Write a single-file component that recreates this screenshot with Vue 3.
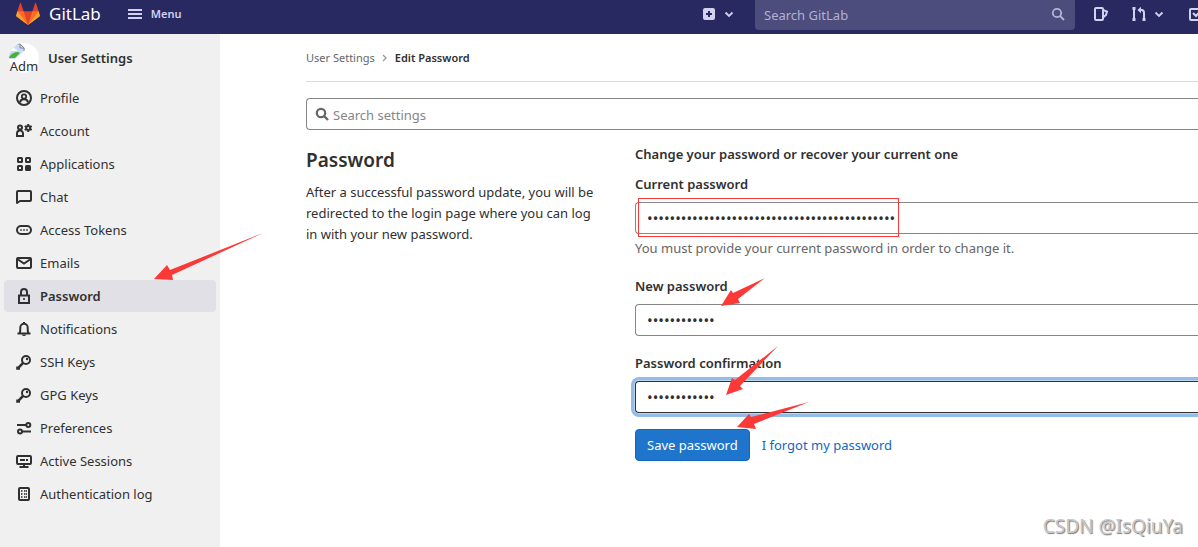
<script setup>
import { ref } from 'vue'

const currentPassword = ref('x'.repeat(44))
const newPassword = ref('x'.repeat(12))
const confirmation = ref('x'.repeat(12))

const items = [
  { label: 'Profile', icon: 'profile' },
  { label: 'Account', icon: 'account' },
  { label: 'Applications', icon: 'applications' },
  { label: 'Chat', icon: 'chat' },
  { label: 'Access Tokens', icon: 'token' },
  { label: 'Emails', icon: 'mail' },
  { label: 'Password', icon: 'lock', active: true },
  { label: 'Notifications', icon: 'bell' },
  { label: 'SSH Keys', icon: 'key' },
  { label: 'GPG Keys', icon: 'key' },
  { label: 'Preferences', icon: 'sliders' },
  { label: 'Active Sessions', icon: 'monitor' },
  { label: 'Authentication log', icon: 'log' },
]

const shape = 'fill="none" stroke="currentColor"'
const line = `${shape} stroke-width="2"`
const icons = {
  profile: `<circle cx="8" cy="8" r="7" ${line}/><circle cx="8" cy="6.5" r="2.2" ${shape} stroke-width="1.800"/><path d="M4 12.500c.3-2.300 1.600-3.300 4-3.300s3.700 1 4 3.300" ${line}/>`,
  account: `<circle cx="4" cy="4.500" r="2" ${line}/><path d="M1 13V10.500a3 3 0 0 1 6 0V13z" ${line}/><circle cx="12.200" cy="5" r="2" ${line}/><path d="M12.200 1v1.500M12.200 7.500V9M8.700 3l1.400.8M14.300 6.200l1.400.8M8.700 7l1.400-.8M14.300 3.800l1.400-.8" ${line}/>`,
  applications: `<rect x="2" y="2" width="4" height="4" rx=".5" ${line}/><rect x="10" y="2" width="4" height="4" rx=".5" ${line}/><rect x="2" y="10" width="4" height="4" rx=".5" ${line}/><rect x="9" y="9" width="6" height="6" rx="1.500" fill="currentColor"/>`,
  chat: `<path d="M1 14V3a1 1 0 0 1 1-1h12a1 1 0 0 1 1 1v8a1 1 0 0 1-1 1H4z" ${line} stroke-linejoin="round"/>`,
  token: `<rect x="1" y="4" width="14" height="8" rx="4" ${line}/><path d="M4 7h2v2H4zM7 7h2v2H7zM10 7h2v2h-2z" fill="currentColor" opacity=".6"/>`,
  mail: `<rect x="1" y="3" width="14" height="10" rx="1" ${line}/><path d="M2 4.500l6 4 6-4" ${line}/>`,
  lock: `<path d="M3 7.500h10V15H3z" ${line}/><path d="M5 7V4a3 3 0 0 1 6 0v3" ${line}/><circle cx="8" cy="11" r="1.100" fill="currentColor"/>`,
  bell: `<path d="M1.500 12.500h13M3.500 12.500c1-1.500.8-3.500.8-6a3.700 3.700 0 0 1 7.400 0c0 2.500-.2 4.500.8 6M8 1v2" ${line}/><path d="M6 13.500h4a2 1.500 0 0 1-4 0z" fill="currentColor"/>`,
  key: `<circle cx="10" cy="6" r="4" ${line}/><circle cx="11" cy="5" r="1.200" fill="currentColor"/><path d="M7.400 8.600L2.300 13.800M1.500 12.500v2h2.500" ${shape} stroke-width="2.600"/>`,
  sliders: `<path d="M1 5h9M6 11.500h9" ${line}/><circle cx="12.300" cy="5" r="2" ${line}/><circle cx="4" cy="11.500" r="2" ${line}/>`,
  monitor: `<rect x="1" y="3" width="14" height="8" rx="1" ${line}/><path d="M8 11v3M3.500 14h9" ${line}/><path d="M4 7h5M10 7h2" ${line}/>`,
  log: `<rect x="3" y="2" width="10" height="12" rx="1" ${line}/><path d="M5 5h2M8 5h3M5 8h2M8 8h3M5 11h2M8 11h3" ${line} stroke-dasharray="1.500 .5" opacity=".8"/>`,
}
</script>

<template>
  <div class="page">
    <header class="navbar">
      <a class="brand" href="#">
        <svg class="logo" viewBox="0 0 36 36" aria-hidden="true">
          <path fill="#e24329" d="M2 14l9.380 9v-9l-4-12.280c-.205-.632-1.176-.632-1.380 0z" />
          <path fill="#e24329" d="M34 14l-9.380 9v-9l4-12.280c.205-.632 1.176-.632 1.380 0z" />
          <path fill="#e24329" d="M18 34.380L3 14h30z" />
          <path fill="#fc6d26" d="M18 34.380L11.380 14H2l4 11zM18 34.380L24.620 14H34l-4 11z" />
          <path fill="#fca326" d="M2 14L.1 20.160c-.18.565 0 1.200.5 1.560l17.420 12.660zM34 14l1.900 6.160c.18.565 0 1.200-.5 1.560L18 34.380z" />
        </svg>
        <span>GitLab</span>
      </a>
      <button class="menu" type="button">
        <svg class="icon" viewBox="0 0 14 14"><path d="M0 3h14M0 7h14M0 11h14" fill="none" stroke="currentColor" stroke-width="2" /></svg>
        <span>Menu</span>
      </button>
      <div class="nav-right">
        <button class="nav-button new" type="button" aria-label="Create new">
          <svg class="icon" viewBox="0 0 16 16"><path fill="currentColor" fill-rule="evenodd" d="M4 2h8a2 2 0 0 1 2 2v8a2 2 0 0 1-2 2H4a2 2 0 0 1-2-2V4a2 2 0 0 1 2-2zm3 3v2H5v2h2v2h2V9h2V7H9V5z" /></svg>
          <svg class="chevron" viewBox="0 0 12 12"><path d="M2.500 4.500L6 8l3.500-3.500" fill="none" stroke="currentColor" stroke-width="1.800" /></svg>
        </button>
        <div class="nav-search">
          <input type="text" placeholder="Search GitLab" aria-label="Search GitLab" />
          <svg class="icon-small" viewBox="0 0 14 14"><circle cx="6" cy="6" r="4.200" fill="none" stroke="currentColor" stroke-width="1.800" /><path d="M9 9l4 4" stroke="currentColor" stroke-width="1.800" /></svg>
        </div>
        <button class="nav-button issues" type="button" aria-label="Issues">
          <svg class="icon" viewBox="0 0 16 16" fill="none" stroke="currentColor" stroke-width="2"><rect x="2" y="2" width="8" height="12" rx="1" /><path d="M10 4l4 1.500-1 3.500-3 2.500" /></svg>
        </button>
        <button class="nav-button merges" type="button" aria-label="Merge requests">
          <svg class="icon" viewBox="0 0 16 16" fill="none" stroke="currentColor" stroke-width="2"><path d="M3 3v10M8 4h2.500c2 0 2.500 1.500 2.500 3v6" /><path d="M1.500 2.500h3M1.500 13.500h3M11.500 13.500h3" stroke-width="3" /><path d="M6.500 4L10 .8v6.400z" fill="currentColor" stroke="none" /></svg>
          <svg class="chevron" viewBox="0 0 12 12"><path d="M2.500 4.500L6 8l3.500-3.500" fill="none" stroke="currentColor" stroke-width="1.800" /></svg>
        </button>
        <button class="nav-button todos" type="button" aria-label="To-do list">
          <svg class="icon" viewBox="0 0 16 16" fill="none" stroke="currentColor" stroke-width="2"><path d="M13 9v4a1 1 0 0 1-1 1H3a1 1 0 0 1-1-1V4a1 1 0 0 1 1-1h7M5 7l3 3 6-7" /></svg>
        </button>
      </div>
    </header>

    <div class="body">
      <aside class="sidebar">
        <a class="context" href="#">
          <span class="avatar">
            <svg viewBox="0 0 16 16" aria-hidden="true">
              <path fill="#c6dcfb" d="M0 0h11l5 5v11H0z" />
              <path fill="#fff" d="M2 7a2 2 0 0 1 4-1 2 2 0 0 1 2 2H2z" />
              <path fill="#4caf37" d="M0 14c2-3 5-5 9-5l2 1-5 5H0z" />
              <path fill="#fff" d="M6 16L16 7v9z" />
              <path fill="none" stroke="#888" d="M1 1h10v4h4v3M11 1l4 4" />
            </svg>
            <span>Adm</span>
          </span>
          <span>User Settings</span>
        </a>
        <nav>
          <ul>
            <li v-for="item in items" :key="item.label">
              <a href="#" :class="{ active: item.active }">
                <svg class="icon" viewBox="0 0 16 16" v-html="icons[item.icon]"></svg>
                <span>{{ item.label }}</span>
              </a>
            </li>
          </ul>
        </nav>
      </aside>

      <main>
        <nav class="breadcrumbs" aria-label="Breadcrumbs">
          <a href="#">User Settings</a>
          <svg viewBox="0 0 8 8"><path d="M2 1l3 3-3 3" fill="none" stroke="#999" stroke-width="1.300" /></svg>
          <a class="here" href="#">Edit Password</a>
        </nav>
        <div class="settings-search">
          <svg class="icon-small" viewBox="0 0 14 14"><circle cx="6" cy="6" r="4.200" fill="none" stroke="currentColor" stroke-width="2.200" /><path d="M9 9l4 4" stroke="currentColor" stroke-width="2.400" /></svg>
          <input type="text" placeholder="Search settings" aria-label="Search settings" />
        </div>
        <div class="columns">
          <section>
            <h1>Password</h1>
            <p>After a successful password update, you will be redirected to the login page where you can log in with your new password.</p>
          </section>
          <form @submit.prevent>
            <h2>Change your password or recover your current one</h2>
            <div class="field">
              <label for="current">Current password</label>
              <div class="control">
                <input id="current" v-model="currentPassword" type="password" />
                <span class="highlight"></span>
              </div>
              <p class="hint">You must provide your current password in order to change it.</p>
            </div>
            <div class="field">
              <label for="new">New password</label>
              <input id="new" v-model="newPassword" type="password" />
            </div>
            <div class="field">
              <label for="confirm">Password confirmation</label>
              <input id="confirm" v-model="confirmation" class="focused" type="password" />
            </div>
            <div class="actions">
              <button type="submit">Save password</button>
              <a href="#">I forgot my password</a>
            </div>
          </form>
        </div>
      </main>
    </div>

    <svg class="arrows" width="820" height="440" viewBox="0 0 820 440" aria-hidden="true">
      <path d="M154 279L167 265L170 270L263 233L172 275L173 280z" />
      <path d="M721 306L731 290L733 293L765 278L738 299L740 303z" />
      <path d="M726 395L732 378L735 380L778 346L740 386L743 389z" />
      <path d="M737 427L749 414L751 417L809 402L754 424L756 429z" />
    </svg>
    <span class="watermark">CSDN @IsQiuYa</span>
  </div>
</template>

<style>
body {
  margin: 0;
}
</style>

<style scoped>
* {
  box-sizing: border-box;
}
.page {
  position: relative;
  display: flex;
  flex-direction: column;
  min-height: 100vh;
  overflow: hidden;
  background: #fff;
  color: #303030;
  font: 13px/20px "Noto Sans", "Open Sans", sans-serif;
}
a {
  color: inherit;
  text-decoration: none;
}
button,
input {
  font: inherit;
}
.icon {
  flex: none;
  width: 16px;
  height: 16px;
}
.icon-small {
  flex: none;
  width: 14px;
  height: 14px;
}
.chevron {
  width: 12px;
  height: 12px;
}
.navbar {
  display: flex;
  align-items: center;
  height: 34px;
  padding: 0 0 6px 16px;
  background: #292961;
  color: #d1d1f0;
}
.brand {
  display: flex;
  align-items: center;
  gap: 9px;
  color: #fff;
  font-size: 17px;
}
.logo {
  width: 24px;
  height: 24px;
}
.menu,
.nav-button {
  display: flex;
  align-items: center;
  padding: 0;
  border: 0;
  background: none;
  color: inherit;
}
.menu {
  gap: 9px;
  margin-left: 27px;
  font-size: 11px;
  font-weight: 600;
}
.menu .icon {
  width: 14px;
  height: 14px;
}
.nav-right {
  display: flex;
  align-items: center;
  margin: 0 -6px 0 auto;
}
.new {
  gap: 6px;
  margin-right: 20px;
}
.nav-search {
  display: flex;
  align-items: center;
  width: 320px;
  height: 32px;
  margin-right: 18px;
  padding: 0 10px 0 9px;
  border-radius: 4px;
  background: #4c4c7d;
  color: #b5b5d8;
}
.nav-search input {
  flex: 1;
  min-width: 0;
  padding: 2px 0 0;
  border: 0;
  outline: 0;
  background: none;
  color: inherit;
}
.nav-search input::placeholder {
  color: #b1b1d2;
}
.issues {
  margin-right: 22px;
}
.merges {
  gap: 6px;
  margin-right: 23px;
}
.body {
  display: flex;
  flex: 1;
}
.sidebar {
  flex: none;
  width: 220px;
  padding: 8px 4px;
  background: #f0f0f0;
}
.context {
  display: flex;
  align-items: center;
  gap: 9px;
  height: 32px;
  margin-bottom: 8px;
  padding-left: 5px;
  font-weight: 600;
}
.avatar {
  width: 30px;
  height: 30px;
  border-radius: 50%;
  background: #fff;
  font-weight: 400;
  line-height: 14px;
  text-align: center;
}
.avatar svg {
  display: block;
  width: 16px;
  height: 16px;
  border-top-left-radius: 15px;
}
.avatar span {
  display: block;
}
ul {
  display: grid;
  gap: 1px;
  margin: 0;
  padding: 0;
  list-style: none;
}
li a {
  display: flex;
  align-items: center;
  gap: 8px;
  height: 32px;
  padding: 0 12px;
  border-radius: 4px;
}
li .active {
  background: #e1e0e6;
  font-weight: 600;
}
main {
  flex: 1;
  min-width: 0;
  padding-left: 86px;
}
.breadcrumbs {
  display: flex;
  align-items: center;
  gap: 6px;
  height: 48px;
  margin-bottom: 16px;
  border-bottom: 1px solid #dbdbdb;
  color: #666;
  font-size: 11px;
}
.breadcrumbs svg {
  width: 8px;
  height: 8px;
}
.here {
  color: #303030;
  font-weight: 600;
}
.settings-search,
form input {
  border: 1px solid #868686;
  border-right: 0;
  border-radius: 4px 0 0 4px;
  background: #fff;
}
.settings-search {
  display: flex;
  align-items: center;
  gap: 4px;
  height: 32px;
  padding-left: 8px;
  color: #666;
}
.settings-search input {
  flex: 1;
  padding: 2px 0 0;
  border: 0;
  outline: 0;
}
.settings-search input::placeholder {
  color: #868686;
}
.columns {
  display: grid;
  grid-template-columns: 299px 1fr;
  gap: 30px;
  padding-top: 14px;
}
h1 {
  margin: 4px 0 10px;
  font-size: 19px;
  font-weight: 600;
  line-height: 24px;
}
p {
  margin: 0;
  line-height: 21px;
}
h2 {
  margin: 0 0 10px;
  font-size: 13px;
  font-weight: 600;
  line-height: 20px;
}
.field + .field {
  margin-top: 17px;
}
label {
  display: block;
  margin-bottom: 8px;
  font-weight: 600;
}
.control {
  position: relative;
}
form input {
  display: block;
  width: 100%;
  height: 32px;
  padding: 0 11px;
  outline: 0;
  color: #303030;
  font-size: 15px;
}
.focused {
  border-color: #303030;
  box-shadow: 0 0 0 1px #bcd7f1, 0 0 0 4px #93bce6;
}
.highlight {
  position: absolute;
  top: -4px;
  left: 3px;
  width: 261px;
  height: 39px;
  border: 1px solid #fb3a38;
}
.hint {
  padding-top: 4px;
  color: #666;
}
.actions {
  display: flex;
  align-items: center;
  gap: 12px;
  margin-top: 16px;
  color: #1068bf;
}
.actions button {
  height: 32px;
  padding: 0 11px;
  border: 1px solid #1068bf;
  border-radius: 4px;
  background: #1f75cb;
  color: #fff;
}
.arrows {
  position: absolute;
  top: 0;
  left: 0;
  fill: #fb3a38;
  pointer-events: none;
}
.watermark {
  position: absolute;
  right: 15px;
  bottom: 9px;
  color: #c8c8c8;
  font-size: 19px;
  line-height: 24px;
  text-shadow: 1px 1px 1px #777;
}
</style>
